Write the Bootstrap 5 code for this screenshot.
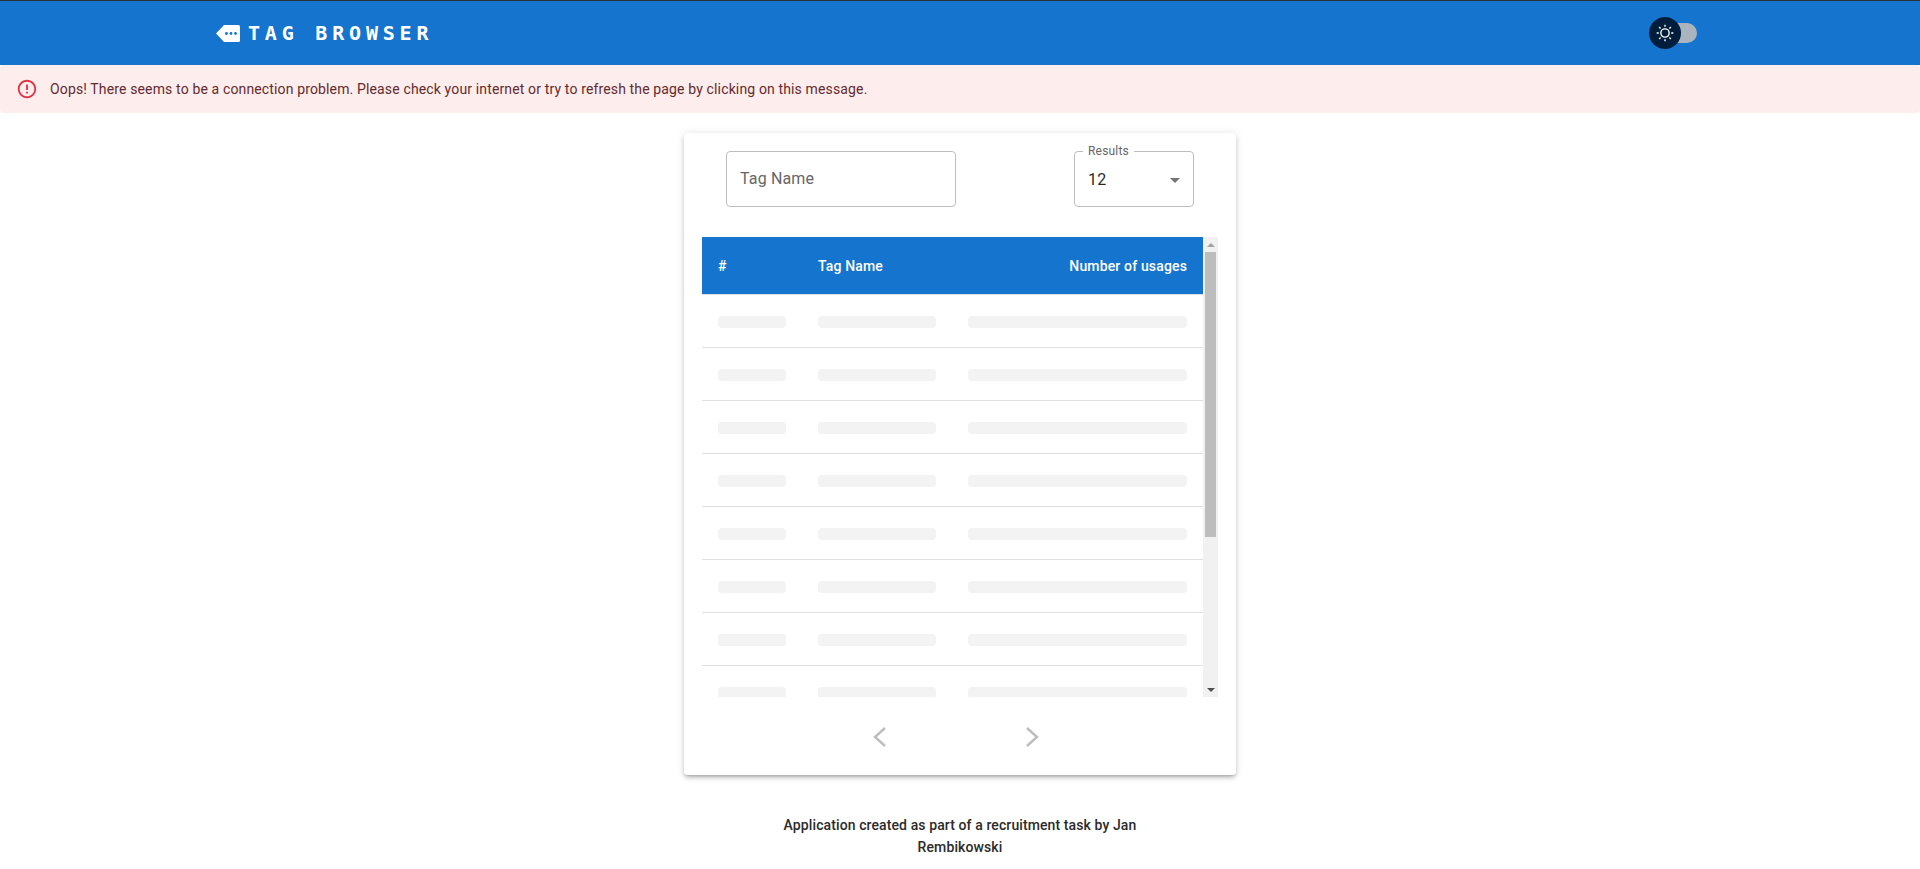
<!DOCTYPE html>
<html lang="en">
<head>
    <meta charset="UTF-8">
    <title>Tag Browser</title>
    <link href="https://cdn.jsdelivr.net/npm/bootstrap@5.3.3/dist/css/bootstrap.min.css" rel="stylesheet">
    <style>
        body {
            font-family: Roboto, "Liberation Sans", sans-serif;
            background-color: #fff;
            color: rgba(0, 0, 0, 0.87);
        }

        .app-bar {
            background-color: #1574ce;
            border-top: 1px solid #2a2f36;
            height: 65px;
            padding: 0;
        }

        .app-bar-inner {
            max-width: 1536px;
            padding: 0 24px;
            height: 100%;
        }

        .brand-text {
            font-family: "DejaVu Sans Mono", monospace;
            font-weight: 700;
            font-size: 20px;
            letter-spacing: 0.3rem;
            color: #fff;
            line-height: 1;
            margin-left: 8px;
        }

        .theme-switch {
            width: 48px;
            height: 20px;
            background-color: #aab4be;
            border-radius: 10px;
            margin-right: 7px;
        }

        .theme-thumb {
            width: 32px;
            height: 32px;
            background-color: #001e3c;
            border-radius: 50%;
            top: -6px;
            left: 0;
        }

        .conn-alert {
            background-color: #fdeded;
            color: #642a2e;
            border: 0;
            border-radius: 4px;
            height: 48px;
            margin: 0;
            padding: 0 16px;
            font-size: 14px;
            letter-spacing: 0.14px;
        }

        .browser-card {
            width: 552px;
            margin-top: 20px;
            padding: 18px 18px 0;
            height: 642px;
            border: 0;
            border-radius: 4px;
            box-shadow: 0 3px 3px -2px rgba(0, 0, 0, 0.2), 0 3px 4px 0 rgba(0, 0, 0, 0.14), 0 1px 8px 0 rgba(0, 0, 0, 0.12);
        }

        .filter-row {
            padding: 0 24px;
            margin-bottom: 30px;
        }

        .tag-input {
            width: 230px;
            height: 56px;
            padding: 0 13px 2px;
            border: 1px solid #bdbdbd;
            border-radius: 4px;
            font-size: 16px;
            font-family: inherit;
            letter-spacing: 0.15px;
        }

        .tag-input::placeholder {
            color: #666;
            opacity: 1;
        }

        .results-box {
            width: 120px;
            height: 56px;
            padding: 2px 13px 0;
            border: 1px solid #bdbdbd;
            border-radius: 4px;
            font-size: 16px;
            letter-spacing: 0.15px;
        }

        .results-label {
            top: -9px;
            left: 8px;
            padding: 0 5px;
            background-color: #fff;
            font-size: 12px;
            line-height: 16px;
            letter-spacing: 0.2px;
            color: #666;
        }

        .results-caret {
            width: 0;
            height: 0;
            border-left: 5px solid transparent;
            border-right: 5px solid transparent;
            border-top: 5px solid #757575;
        }

        .table-scroll {
            height: 460px;
            overflow: hidden;
        }

        .tag-table {
            table-layout: fixed;
            width: 501px;
            margin: 0;
        }

        .tag-table th {
            background-color: #1574ce;
            color: #fff;
            height: 57px;
            padding: 3px 16px 0;
            font-size: 14px;
            font-weight: 500;
            letter-spacing: 0.15px;
            border-bottom: 1px solid #e0e0e0;
            vertical-align: middle;
        }

        .tag-table td {
            padding: 21px 16px 19px;
            border-bottom: 1px solid #e0e0e0;
        }

        .skeleton-line {
            height: 12px;
            background-color: #f3f3f3;
            border-radius: 4px;
        }

        .fake-scrollbar {
            width: 15px;
            background-color: #f1f1f1;
        }

        .scroll-up {
            width: 0;
            height: 0;
            border-left: 4px solid transparent;
            border-right: 4px solid transparent;
            border-bottom: 4px solid #a3a3a3;
            margin: 6px auto 5px;
        }

        .scroll-thumb {
            width: 11px;
            height: 285px;
            background-color: #bdbdbd;
            margin-left: 2px;
        }

        .scroll-down {
            width: 0;
            height: 0;
            border-left: 4px solid transparent;
            border-right: 4px solid transparent;
            border-top: 4px solid #505050;
            margin: auto auto 5px;
        }

        .pager {
            height: 78px;
            gap: 128px;
            padding: 2px 8px 0 0;
        }

        .pager svg {
            display: block;
        }

        .credit {
            width: 360px;
            margin: 39px auto 0;
            font-size: 14px;
            font-weight: 500;
            line-height: 22px;
            letter-spacing: 0.1px;
            text-align: center;
            color: #2b2b2b;
        }
    </style>
</head>
<body>
    <nav class="navbar app-bar">
        <div class="container-fluid app-bar-inner d-flex justify-content-between align-items-center flex-nowrap">
            <div class="d-flex align-items-center">
                <svg width="24" height="17" viewBox="0 0 24 17">
                    <path fill="#fff" d="M8 0H22.5Q24 0 24 1.5V15.5Q24 17 22.500 17H8L0 8.500Z"/>
                    <circle cx="10.500" cy="8.500" r="1.400" fill="#1574ce"/>
                    <circle cx="15" cy="8.500" r="1.400" fill="#1574ce"/>
                    <circle cx="19.500" cy="8.500" r="1.400" fill="#1574ce"/>
                </svg>
                <span class="brand-text">TAG BROWSER</span>
            </div>
            <div class="theme-switch position-relative">
                <div class="theme-thumb position-absolute d-flex align-items-center justify-content-center">
                    <svg width="20" height="20" viewBox="0 0 20 20">
                        <path fill="#fff" d="M9.305 1.667V3.75h1.389V1.667h-1.39zm-4.707 1.95l-.982.982L5.09 6.072l.982-.982-1.473-1.473zm10.802 0L13.927 5.09l.982.982 1.473-1.473-.982-.982zM10 5.139a4.872 4.872 0 00-4.862 4.86A4.872 4.872 0 0010 14.862 4.872 4.872 0 0014.86 10 4.872 4.872 0 0010 5.139zm0 1.389A3.462 3.462 0 0113.471 10a3.462 3.462 0 01-3.473 3.472A3.462 3.462 0 016.527 10 3.462 3.462 0 0110 6.528zM1.665 9.305v1.39h2.083v-1.39H1.666zm14.583 0v1.39h2.084v-1.39h-2.084zM5.09 13.928L3.616 15.4l.982.982 1.473-1.473-.982-.982zm9.82 0l-.982.982 1.473 1.473.982-.982-1.473-1.473zM9.305 16.25v2.083h1.389V16.25h-1.39z"/>
                    </svg>
                </div>
            </div>
        </div>
    </nav>

    <div class="alert conn-alert d-flex align-items-center gap-2" role="alert">
        <svg width="22" height="22" viewBox="0 0 24 24" class="me-1 flex-shrink-0">
            <path fill="#dc3545" d="M11 15h2v2h-2zm0-8h2v6h-2zm.99-5C6.47 2 2 6.48 2 12s4.47 10 9.99 10C17.52 22 22 17.52 22 12S17.52 2 11.99 2zM12 20c-4.42 0-8-3.58-8-8s3.58-8 8-8 8 3.58 8 8-3.58 8-8 8z"/>
        </svg>
        <span>Oops! There seems to be a connection problem. Please check your internet or try to refresh the page by clicking on this message.</span>
    </div>

    <div class="card browser-card mx-auto">
        <div class="filter-row d-flex justify-content-between">
            <input type="text" class="form-control tag-input" placeholder="Tag Name">
            <div class="results-box position-relative d-flex align-items-center justify-content-between">
                <span class="results-label position-absolute">Results</span>
                <span>12</span>
                <span class="results-caret"></span>
            </div>
        </div>

        <div class="d-flex">
            <div class="table-scroll flex-grow-1">
                <table class="table tag-table">
                    <colgroup>
                        <col style="width: 100px">
                        <col style="width: 150px">
                        <col style="width: 251px">
                    </colgroup>
                    <thead>
                        <tr>
                            <th>#</th>
                            <th>Tag Name</th>
                            <th class="text-end">Number of usages</th>
                        </tr>
                    </thead>
                    <tbody id="tagRows"></tbody>
                </table>
            </div>
            <div class="fake-scrollbar d-flex flex-column">
                <div class="scroll-up"></div>
                <div class="scroll-thumb"></div>
                <div class="scroll-down"></div>
            </div>
        </div>

        <div class="pager d-flex justify-content-center align-items-center">
            <svg width="24" height="24" viewBox="0 0 24 24">
                <path d="M17 3 7 12l10 9" fill="none" stroke="#bdbdbd" stroke-width="2.400"/>
            </svg>
            <svg width="24" height="24" viewBox="0 0 24 24">
                <path d="M7 3l10 9-10 9" fill="none" stroke="#bdbdbd" stroke-width="2.400"/>
            </svg>
        </div>
    </div>

    <p class="credit">Application created as part of a recruitment task by Jan Rembikowski</p>

    <script>
        const tbody = document.getElementById("tagRows");
        for (let i = 0; i < 12; i++) {
            const row = document.createElement("tr");
            row.innerHTML = `
                <td><div class="skeleton-line"></div></td>
                <td><div class="skeleton-line"></div></td>
                <td><div class="skeleton-line"></div></td>
            `;
            tbody.appendChild(row);
        }
    </script>
    <script src="https://cdn.jsdelivr.net/npm/bootstrap@5.3.3/dist/js/bootstrap.bundle.min.js"></script>
</body>
</html>
